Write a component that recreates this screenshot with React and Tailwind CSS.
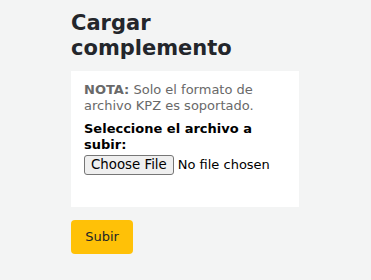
export default function App() {
  return (
    <div className="min-h-[280px] w-full bg-[#f3f4f4] text-[#212529]" style={{ fontFamily: '"DejaVu Sans", sans-serif' }}>
      <div className="pl-[71px] pt-[11px]">
        <h1 className="text-[21px] font-bold leading-[25.2px] text-[#23262b] mb-[9.6px]">
          Cargar<br />complemento
        </h1>
        <div className="w-[228px] bg-white pl-[13px] pr-[13px] pt-[11px] pb-[32px]">
          <p className="text-[13px] leading-[15.6px] text-[#696969]">
            <span className="font-bold">NOTA:</span> Solo el formato de archivo KPZ es soportado.
          </p>
          <label className="block mt-[8px] text-[13px] leading-[15.6px] font-bold text-black">
            Seleccione el archivo a subir:
          </label>
          <input
            type="file"
            className="block mt-[3px] text-[13px] leading-[15.6px] text-black file:mr-[4px] file:border file:border-[#767676] file:rounded-[3px] file:bg-[#efefef] file:px-[6px] file:py-[1px] file:text-[13.33px] file:text-black"
          />
        </div>
        <button className="mt-[13px] h-[34px] w-[62px] rounded-[4px] bg-[#ffc107] text-[13px] text-[#212529]">
          Subir
        </button>
      </div>
    </div>
  );
}
